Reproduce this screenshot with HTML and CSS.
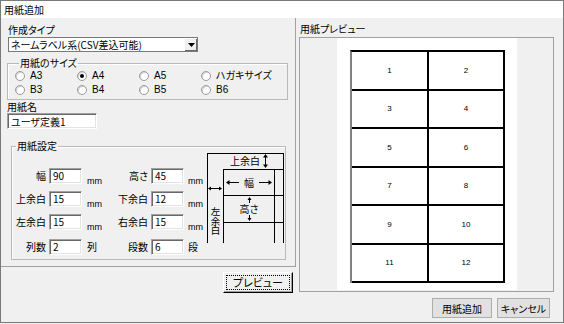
FILE: index.html
```html
<!DOCTYPE html>
<html lang="ja">
<head>
<meta charset="utf-8">
<title>用紙追加</title>
<link rel="stylesheet" href="styles.css">
</head>
<body>
<div class="window">
  <div class="titlebar">用紙追加</div>
  <div class="body">
    <div class="left-col">
      <div class="panel">
        <div class="label type-label">作成タイプ</div>
        <div class="combo">
          <span class="combo-text">ネームラベル系(CSV差込可能)</span>
          <span class="combo-btn"><svg width="7" height="4" viewBox="0 0 7 4"><path d="M0 0H7L3.5 4Z" fill="#000"/></svg></span>
        </div>
        <fieldset class="group size-group">
          <legend>用紙のサイズ</legend>
          <div class="radios">
            <div class="radio"><span class="circle"></span>A3</div>
            <div class="radio"><span class="circle checked"></span>A4</div>
            <div class="radio"><span class="circle"></span>A5</div>
            <div class="radio"><span class="circle"></span>ハガキサイズ</div>
            <div class="radio"><span class="circle"></span>B3</div>
            <div class="radio"><span class="circle"></span>B4</div>
            <div class="radio"><span class="circle"></span>B5</div>
            <div class="radio"><span class="circle"></span>B6</div>
          </div>
        </fieldset>
        <div class="label name-label">用紙名</div>
        <div class="textbox name-box">ユーザ定義1</div>
        <fieldset class="group setting-group">
          <legend>用紙設定</legend>
          <div class="setting-body">
            <div class="fields">
              <div class="f-label">幅</div><div class="textbox num">90</div><div class="unit">mm</div>
              <div class="f-label">高さ</div><div class="textbox num">45</div><div class="unit">mm</div>
              <div class="f-label">上余白</div><div class="textbox num">15</div><div class="unit">mm</div>
              <div class="f-label">下余白</div><div class="textbox num">12</div><div class="unit">mm</div>
              <div class="f-label">左余白</div><div class="textbox num">15</div><div class="unit">mm</div>
              <div class="f-label">右余白</div><div class="textbox num">15</div><div class="unit">mm</div>
              <div class="f-label">列数</div><div class="textbox num">2</div><div class="unit unit-k">列</div>
              <div class="f-label">段数</div><div class="textbox num">6</div><div class="unit unit-k">段</div>
            </div>
            <svg class="diagram" width="77" height="90" viewBox="0 0 77 90" shape-rendering="crispEdges">
              <g stroke="#000" stroke-width="1" fill="none">
                <path d="M0.5 90V0.5H76.5V90"/>
                <path d="M16.5 90V16.5H76.5"/>
                <path d="M67.5 16.5V90"/>
                <path d="M16.5 42.5H76.5"/>
                <path d="M16.5 69.5H76.5"/>
                <path d="M58.5 2V14"/>
                <path d="M20 29.5H32M52 29.5H64"/>
                <path d="M42.5 45V50M42.5 62V67"/>
                <path d="M2 35.5H14"/>
              </g>
              <g fill="#000" shape-rendering="geometricPrecision">
                <path d="M58.5 1L56 4.5H61Z"/>
                <path d="M58.5 15L56 11.5H61Z"/>
                <path d="M19 29.5L22.5 27V32Z"/>
                <path d="M65 29.5L61.5 27V32Z"/>
                <path d="M42.5 44L40.5 47H44.5Z"/>
                <path d="M42.5 68L40.5 65H44.5Z"/>
                <path d="M1 35.5L4 33.5V37.5Z"/>
                <path d="M15 35.5L12 33.5V37.5Z"/>
              </g>
              <g class="dtext">
                <text x="38" y="12" text-anchor="middle">上余白</text>
                <text x="42" y="33.5" text-anchor="middle">幅</text>
                <text x="42" y="59.5" text-anchor="middle">高さ</text>
                <text class="vtext" x="8.5" y="54">左余白</text>
              </g>
            </svg>
          </div>
        </fieldset>
      </div>
      <div class="preview-row">
        <button class="btn3d"><span class="focus">プレビュー</span></button>
      </div>
    </div>
    <div class="right-col">
      <div class="label preview-label">用紙プレビュー</div>
      <div class="preview-frame">
        <div class="paper">
          <div class="sheet">
            <div class="cell">1</div><div class="cell">2</div>
            <div class="cell">3</div><div class="cell">4</div>
            <div class="cell">5</div><div class="cell">6</div>
            <div class="cell">7</div><div class="cell">8</div>
            <div class="cell">9</div><div class="cell">10</div>
            <div class="cell">11</div><div class="cell">12</div>
          </div>
        </div>
      </div>
      <div class="actions">
        <button class="btn add-btn">用紙追加</button>
        <button class="btn cancel-btn">キャンセル</button>
      </div>
    </div>
  </div>
</div>
</body>
</html>
```

FILE: styles.css
```css
* { box-sizing: border-box; }
html, body { margin: 0; padding: 0; }
body {
  width: 564px;
  height: 324px;
  overflow: hidden;
  background: #f0f0f0;
  font-family: "Noto Sans CJK JP", "Liberation Sans", sans-serif;
  font-size: 10px;
  font-feature-settings: "palt" 1;
  color: #000;
}
.window {
  width: 564px;
  height: 323px;
  border: 1px solid #7a7a7a;
  background: #f0f0f0;
  display: flex;
  flex-direction: column;
}
.titlebar {
  height: 17px;
  line-height: 17px;
  background: #fff;
  padding-left: 3px;
  font-size: 10px;
}
.body {
  display: flex;
  flex: 1;
}
.left-col {
  width: 295px;
  display: flex;
  flex-direction: column;
}
.panel {
  height: 249px;
  border-right: 1px solid #a0a0a0;
  border-bottom: 1px solid #a0a0a0;
  padding: 4px 0 0 6px;
}
.label {
  line-height: 14px;
  white-space: nowrap;
}
.type-label { margin-left: 1px; padding-top: 1px; height: 15px; line-height: 13px; }
.combo {
  margin: 0 0 0 1px;
  width: 190px;
  height: 15px;
  background: #fff;
  border: 1px solid #7a7a7a;
  display: flex;
  align-items: center;
  justify-content: space-between;
}
.combo-text {
  padding-left: 2px;
  line-height: 13px;
  white-space: nowrap;
}
.combo-btn {
  width: 13px;
  height: 13px;
  background: #f0f0f0;
  border-left: 1px solid #fff;
  border-top: 1px solid #fff;
  box-shadow: inset -1px -1px 0 #696969;
  display: flex;
  align-items: center;
  justify-content: center;
}
.group {
  margin: 0;
  padding: 0;
  border: 1px solid #b9b9b9;
  box-shadow: inset 1px 1px 0 #fff;
  min-width: 0;
}
.group legend {
  margin-left: 4px;
  padding: 0 1px;
  line-height: 12px;
}
.size-group {
  margin-top: 5px;
  width: 281px;
  padding: 0 0 2px 7px;
}
.radios {
  display: grid;
  grid-template-columns: repeat(4, 62px);
  grid-auto-rows: 14px;
}
.radio {
  display: flex;
  align-items: center;
  gap: 5px;
  white-space: nowrap;
  line-height: 14px;
  font-family: "Liberation Sans", "Noto Sans CJK JP", sans-serif;
}
.circle {
  flex-shrink: 0;
  width: 10px;
  height: 10px;
  border-radius: 50%;
  background: #fff;
  border: 1px solid #9a9a9a;
  box-shadow: inset 1px 1px 0 #d0d0d0;
  display: flex;
  align-items: center;
  justify-content: center;
}
.circle.checked::after {
  content: "";
  width: 4px;
  height: 4px;
  border-radius: 50%;
  background: #000;
}
.name-label {
  margin: 1px 0 1px;
  line-height: 11px;
}
.textbox {
  background: #fff;
  border-top: 1px solid #a0a0a0;
  border-left: 1px solid #a0a0a0;
  border-right: 1px solid #fff;
  border-bottom: 1px solid #fff;
  box-shadow: inset 1px 1px 0 #696969, inset -1px -1px 0 #e3e3e3;
  padding-left: 3px;
  line-height: 14px;
  white-space: nowrap;
}
.name-box {
  width: 90px;
  height: 16px;
  padding-top: 1px;
  line-height: 13px;
}
.setting-group {
  margin: 11px 0 0 4px;
  width: 275px;
  height: 120px;
}
.setting-body {
  display: flex;
  align-items: flex-start;
}
.fields {
  margin-top: 16px;
  display: grid;
  grid-template-columns: 37px 33px 36px 33px 33px 23px;
  grid-template-rows: 23px 23px 25px 16px;
}
.f-label {
  text-align: right;
  padding-right: 3px;
  height: 16px;
  line-height: 16px;
  white-space: nowrap;
}
.num {
  height: 16px;
}
.unit {
  font-family: "Liberation Sans", sans-serif;
  font-size: 9px;
  line-height: 10px;
  padding: 8px 0 0 5px;
}
.unit-k {
  font-family: "Noto Sans CJK JP", sans-serif;
  font-size: 10px;
  line-height: 16px;
  padding-top: 0;
}
.fields .unit:nth-child(6),
.fields .unit:nth-child(12),
.fields .unit:nth-child(18),
.fields .unit:nth-child(24) { padding-left: 4px; }
.diagram {
  margin-top: 1px;
  display: block;
}
.dtext text {
  font-family: "Noto Sans CJK JP", sans-serif;
  font-size: 10px;
  fill: #000;
}
.dtext .vtext {
  writing-mode: vertical-rl;
  font-size: 9.5px;
}
.preview-row {
  display: flex;
  justify-content: flex-end;
  padding: 5px 3px 0 0;
}
.btn3d {
  width: 70px;
  height: 21px;
  padding: 2px;
  background: #f0f0f0;
  border-top: 1px solid #fff;
  border-left: 1px solid #fff;
  border-right: 1px solid #000;
  border-bottom: 1px solid #000;
  box-shadow: inset -1px -1px 0 #a0a0a0;
  font-family: inherit;
  font-size: 11px;
  font-feature-settings: "palt" 1;
  display: flex;
}
.btn3d .focus {
  flex: 1;
  border: 1px dotted #000;
  line-height: 13px;
  text-align: center;
}
.right-col {
  width: 267px;
  display: flex;
  flex-direction: column;
}
.preview-label {
  margin-top: 4px;
  padding-left: 4px;
}
.preview-frame {
  margin: 1px 0 0 3px;
  width: 255px;
  height: 255px;
  border: 1px solid #a0a0a0;
}
.paper {
  margin-left: 37px;
  width: 180px;
  height: 252px;
  background: #fff;
  padding: 12px 0 0 13px;
}
.sheet {
  width: 155px;
  display: grid;
  grid-template-columns: 77px 76px;
  grid-auto-rows: 38.5px;
  border-top: 2px solid #000;
  border-left: 2px solid #808080;
}
.cell {
  border-right: 2px solid #000;
  border-bottom: 2px solid #000;
  display: flex;
  align-items: center;
  justify-content: center;
  font-family: "Liberation Sans", sans-serif;
  font-size: 8px;
}
.actions {
  margin-top: 6px;
  padding-right: 13px;
  display: flex;
  justify-content: flex-end;
  gap: 5px;
}
.btn {
  height: 20px;
  padding: 0;
  background: #e1e1e1;
  border: 1px solid #adadad;
  font-family: inherit;
  font-size: 10px;
  font-feature-settings: "palt" 1;
  color: #000;
}
.add-btn { width: 60px; }
.cancel-btn { width: 53px; }
```
